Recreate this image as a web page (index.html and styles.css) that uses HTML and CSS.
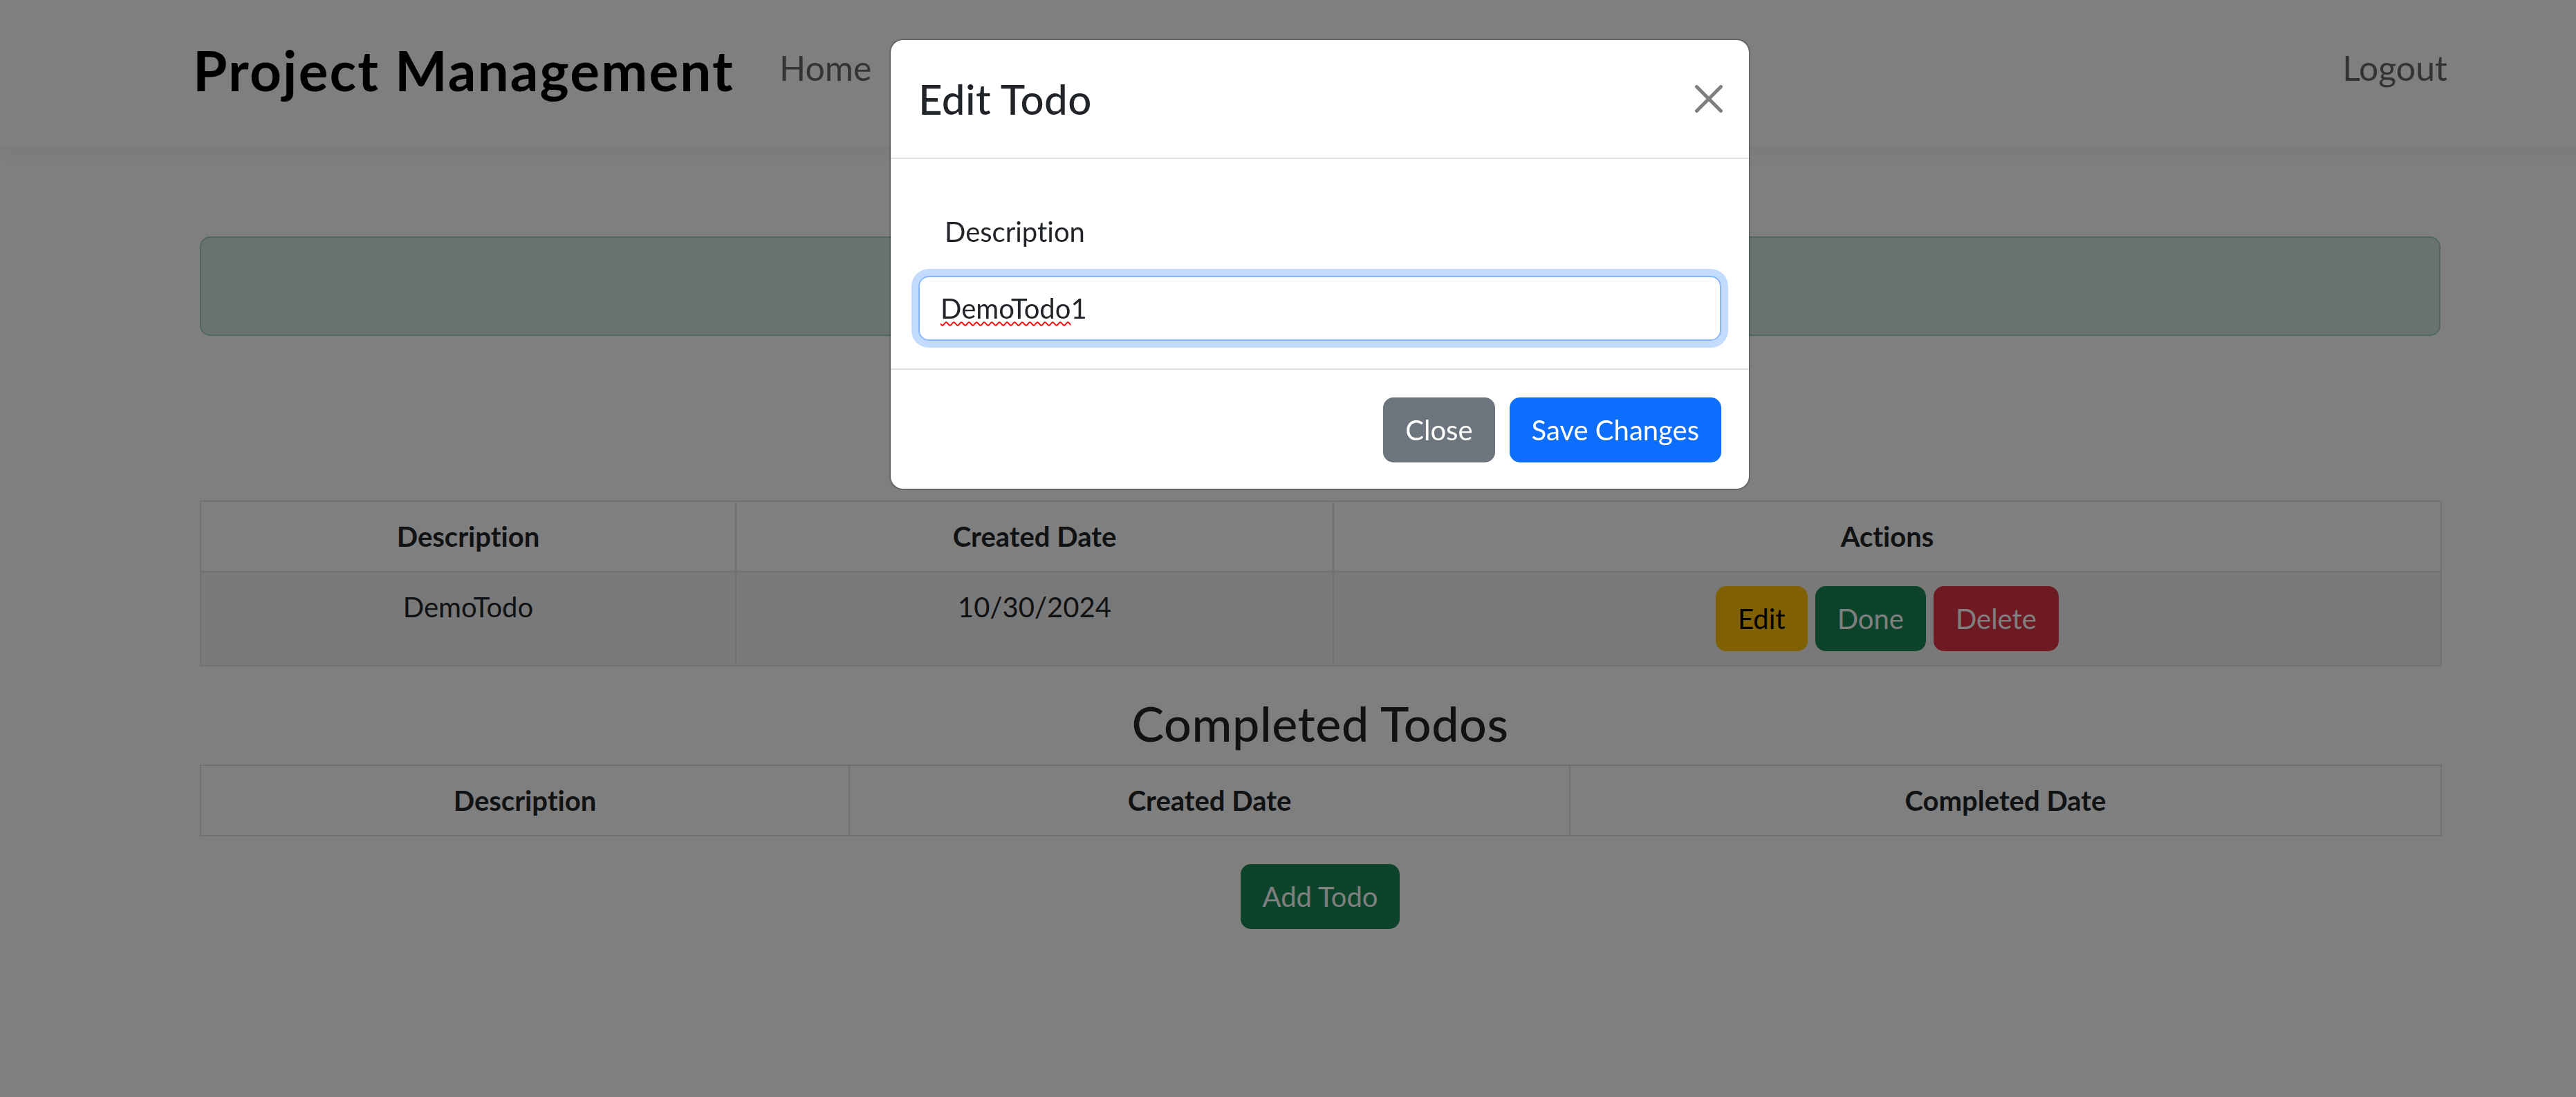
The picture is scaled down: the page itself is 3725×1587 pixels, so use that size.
FILE: index.html
```html
<!DOCTYPE html>
<html lang="en">
<head>
<meta charset="utf-8">
<title>Project Management</title>
<link rel="stylesheet" href="styles.css">
</head>
<body>
<div class="page">
  <header class="navbar">
    <div class="nav-inner">
      <a class="brand" href="#">Project Management</a>
      <nav class="nav-links"><a class="nav-link" href="#">Home</a></nav>
      <a class="nav-link logout" href="#">Logout</a>
    </div>
  </header>

  <main class="container">
    <div class="alert alert-success" role="alert"></div>

    <table class="table t1">
      <colgroup><col class="c1a"><col class="c1b"><col class="c1c"></colgroup>
      <thead>
        <tr><th>Description</th><th>Created Date</th><th>Actions</th></tr>
      </thead>
      <tbody>
        <tr class="striped">
          <td>DemoTodo</td>
          <td>10/30/2024</td>
          <td>
            <div class="actions">
              <button class="btn btn-warning">Edit</button>
              <button class="btn btn-success">Done</button>
              <button class="btn btn-danger">Delete</button>
            </div>
          </td>
        </tr>
      </tbody>
    </table>

    <h3 class="section-title">Completed Todos</h3>
    <table class="table t2">
      <colgroup><col class="c2a"><col class="c2b"><col class="c2c"></colgroup>
      <thead>
        <tr><th>Description</th><th>Created Date</th><th>Completed Date</th></tr>
      </thead>
      <tbody></tbody>
    </table>

    <div class="add-row"><button class="btn btn-success">Add Todo</button></div>
  </main>

  <div class="backdrop"></div>

  <div class="modal" role="dialog" aria-modal="true">
    <div class="modal-header">
      <h4 class="modal-title">Edit Todo</h4>
      <button class="btn-close" aria-label="Close">
        <svg viewBox="0 0 16 16" width="40" height="40"><path d="M.293.293a1 1 0 0 1 1.414 0L8 6.586 14.293.293a1 1 0 1 1 1.414 1.414L9.414 8l6.293 6.293a1 1 0 0 1-1.414 1.414L8 9.414l-6.293 6.293a1 1 0 0 1-1.414-1.414L6.586 8 .293 1.707a1 1 0 0 1 0-1.414"/></svg>
      </button>
    </div>
    <div class="modal-body">
      <label class="form-label">Description</label>
      <div class="form-control" tabindex="0"><span class="misspelled">DemoTodo</span>1</div>
    </div>
    <div class="modal-footer">
      <button class="btn btn-secondary">Close</button>
      <button class="btn btn-primary">Save Changes</button>
    </div>
  </div>
</div>
</body>
</html>
```

FILE: styles.css
```css
html, body {
  margin: 0;
  padding: 0;
  overflow: hidden;
  background: #fff;
}

body {
  font-family: "Lato", "Liberation Sans", sans-serif;
  font-size: 40px;
  line-height: 1.5;
  color: #212529;
  font-variant-ligatures: no-common-ligatures;
}

.page {
  width: 3818px;
  height: 1587px;
  position: relative;
}

/* Navbar */
.navbar {
  height: 212px;
  background: #fff;
  box-shadow: 0 10px 30px rgba(0, 0, 0, 0.05);
}

.nav-inner {
  display: flex;
  align-items: flex-start;
  padding: 53px 279px 0;
}

.brand {
  font-size: 80px;
  font-weight: 700;
  line-height: 96px;
  letter-spacing: 2.2px;
  color: #000;
  text-decoration: none;
  margin-right: 45px;
}

.nav-links {
  display: flex;
  flex: 1;
}

.nav-link {
  font-size: 50px;
  line-height: 75px;
  margin-top: 8px;
  padding: 0 20px;
  color: rgba(0, 0, 0, 0.6);
  text-decoration: none;
}

.logout {
  padding-right: 0;
}

/* Main */
.container {
  width: 3240px;
  margin: 0 auto;
  padding-top: 130px;
  text-align: center;
}

.alert {
  box-sizing: border-box;
  height: 144px;
  border: 2px solid #a3cfbb;
  background: #d1e7dd;
  border-radius: 15px;
  margin-bottom: 238px;
}

.table {
  width: 100%;
  border-collapse: collapse;
  table-layout: fixed;
  margin-bottom: 40px;
  color: #212529;
}

.table th,
.table td {
  border: 2px solid #dee2e6;
  padding: 20px;
  line-height: 60px;
  vertical-align: top;
  text-align: center;
}

.table th {
  font-weight: 700;
}

.striped td {
  background: rgba(0, 0, 0, 0.05);
}

.c1a { width: 774px; }
.c1b { width: 864px; }
.c1c { width: 1602px; }
.c2a { width: 938px; }
.c2b { width: 1042px; }
.c2c { width: 1260px; }

.actions {
  display: flex;
  justify-content: center;
  gap: 11px;
}

.section-title {
  font-size: 70px;
  font-weight: 500;
  line-height: 84px;
  letter-spacing: 0.6px;
  margin: 4px 0 18px;
}

.add-row {
  display: flex;
  justify-content: center;
}

/* Buttons */
.btn {
  font-family: inherit;
  font-size: 40px;
  line-height: 60px;
  padding: 15px 30px;
  border: 2px solid transparent;
  border-radius: 15px;
  cursor: pointer;
}

.btn-warning { background: #ffc107; border-color: #ffc107; color: #000; }
.btn-success { background: #198754; border-color: #198754; color: #fff; }
.btn-danger { background: #dc3545; border-color: #dc3545; color: #fff; }
.btn-secondary { background: #6c757d; border-color: #6c757d; color: #fff; }
.btn-primary { background: #0d6efd; border-color: #0d6efd; color: #fff; }

/* Backdrop + modal */
.backdrop {
  position: fixed;
  inset: 0;
  background: rgba(0, 0, 0, 0.5);
  z-index: 10;
}

.modal {
  position: absolute;
  z-index: 20;
  top: 56px;
  left: 50%;
  margin-left: -623px;
  width: 1245px;
  box-sizing: border-box;
  background: #fff;
  background-clip: padding-box;
  border: 2px solid rgba(0, 0, 0, 0.2);
  border-radius: 20px;
}

.modal-header {
  display: flex;
  align-items: center;
  justify-content: space-between;
  padding: 40px;
  border-bottom: 2px solid #dee2e6;
}

.modal-title {
  margin: 0;
  font-size: 60px;
  font-weight: 500;
  line-height: 90px;
  letter-spacing: 0.4px;
  color: #212529;
}

.btn-close {
  width: 40px;
  height: 40px;
  padding: 0;
  margin-right: -2px;
  border: 0;
  background: transparent;
  opacity: 0.5;
  display: flex;
}

.btn-close svg {
  fill: #000;
}

.modal-body {
  padding: 40px;
}

.form-label {
  display: block;
  margin: 35px 0 34px;
  padding-left: 38px;
  line-height: 60px;
  text-align: left;
}

.form-control {
  box-sizing: border-box;
  height: 94px;
  padding: 15px 30px;
  line-height: 60px;
  border: 2px solid #86b7fe;
  border-radius: 15px;
  box-shadow: 0 0 0 10px rgba(13, 110, 253, 0.25);
  color: #212529;
  outline: none;
}

.misspelled {
  text-decoration: underline wavy #ff0000;
  text-decoration-thickness: 2px;
  text-underline-offset: 4px;
}

.modal-footer {
  display: flex;
  justify-content: flex-end;
  gap: 21px;
  padding: 40px 40px 38px;
  border-top: 2px solid #dee2e6;
}
```
